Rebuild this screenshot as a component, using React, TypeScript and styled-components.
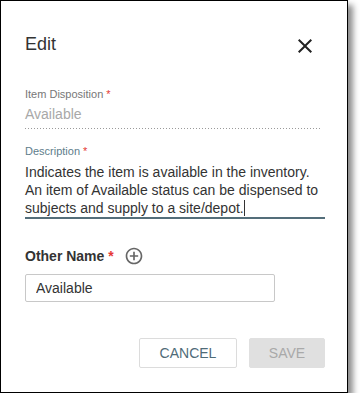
import React from "react";
import styled, { createGlobalStyle } from "styled-components";

const Global = createGlobalStyle`
  html, body { margin: 0; padding: 0; background: #ffffff; }
  body { font-family: "Liberation Sans", Arial, sans-serif; }
  * { box-sizing: border-box; }
`;

const Dialog = styled.div`
  width: 348px;
  height: 393px;
  background: #ffffff;
  border: 1px solid #000000;
  box-shadow: 5px 5px 6px rgba(0, 0, 0, 0.45);
  padding: 31px 22px 0 24px;
  display: flex;
  flex-direction: column;
`;

const Header = styled.div`
  display: flex;
  justify-content: space-between;
  align-items: flex-start;
  height: 24px;
`;

const Title = styled.h2`
  margin: 0;
  font-size: 18px;
  line-height: 24px;
  font-weight: 400;
  color: #333333;
`;

const CloseButton = styled.button`
  border: none;
  background: transparent;
  padding: 0;
  margin: 2px 8px 0 0;
  width: 24px;
  height: 24px;
  display: flex;
  cursor: pointer;
  color: #222222;
`;

const Field = styled.div<{ $top: number }>`
  margin-top: ${(p) => p.$top}px;
  display: flex;
  flex-direction: column;
`;

const Label = styled.div<{ $color: string }>`
  font-size: 11px;
  line-height: 13px;
  color: ${(p) => p.$color};
`;

const Req = styled.span`
  color: #e53935;
`;

const ReadValue = styled.div`
  margin-top: 4px;
  font-size: 14px;
  line-height: 18px;
  color: #a8a8a8;
  padding-bottom: 6px;
  margin-right: 3px;
  background-image: repeating-linear-gradient(
    to right,
    #9a9a9a 0,
    #9a9a9a 1px,
    transparent 1px,
    transparent 3px
  );
  background-size: 100% 1px;
  background-repeat: no-repeat;
  background-position: left bottom;
`;

const TextArea = styled.div`
  margin-top: 5px;
  font-size: 14px;
  line-height: 18px;
  color: #333333;
  border-bottom: 2px solid #546e7a;
`;

const Caret = styled.span`
  display: inline-block;
  width: 1px;
  height: 16px;
  background: #333333;
  vertical-align: -3px;
`;

const SectionRow = styled.div`
  margin-top: 27px;
  display: flex;
  align-items: center;
  gap: 10px;
  height: 20px;
`;

const SectionTitle = styled.div`
  font-size: 14px;
  line-height: 20px;
  font-weight: 700;
  color: #333333;
`;

const AddButton = styled.button`
  border: none;
  background: transparent;
  padding: 0;
  width: 20px;
  height: 20px;
  display: flex;
  color: #666666;
  cursor: pointer;
`;

const Input = styled.input`
  margin-top: 8px;
  width: 250px;
  height: 28px;
  border: 1px solid #c8c8c8;
  border-radius: 2px;
  padding: 0 10px;
  font-family: "Liberation Sans", Arial, sans-serif;
  font-size: 14px;
  color: #333333;
  outline: none;
`;

const Actions = styled.div`
  margin-top: 36px;
  display: flex;
  justify-content: flex-end;
  gap: 12px;
`;

const Button = styled.button<{ $variant: "outline" | "disabled"; $w: number }>`
  width: ${(p) => p.$w}px;
  height: 30px;
  border-radius: 2px;
  font-family: "Liberation Sans", Arial, sans-serif;
  font-size: 14px;
  text-transform: uppercase;
  cursor: pointer;
  border: 1px solid ${(p) => (p.$variant === "outline" ? "#dcdcdc" : "#e0e0e0")};
  background: ${(p) => (p.$variant === "outline" ? "#ffffff" : "#e0e0e0")};
  color: ${(p) => (p.$variant === "outline" ? "#4f6b78" : "#a9a9a9")};
`;

export default function App() {
  return (
    <>
      <Global />
      <Dialog>
        <Header>
          <Title>Edit</Title>
          <CloseButton aria-label="Close">
            <svg width="24" height="24" viewBox="0 0 24 24">
              <path
                fill="currentColor"
                d="M19 6.41L17.59 5 12 10.59 6.41 5 5 6.41 10.59 12 5 17.59 6.41 19 12 13.41 17.59 19 19 17.59 13.41 12z"
              />
            </svg>
          </CloseButton>
        </Header>

        <Field $top={32}>
          <Label $color="#777777">
            Item Disposition <Req>*</Req>
          </Label>
          <ReadValue>Available</ReadValue>
        </Field>

        <Field $top={16}>
          <Label $color="#607d8b">
            Description <Req>*</Req>
          </Label>
          <TextArea>
            Indicates the item is available in the inventory. An item of Available status can be
            dispensed to subjects and supply to a site/depot.
            <Caret />
          </TextArea>
        </Field>

        <SectionRow>
          <SectionTitle>
            Other Name <Req>*</Req>
          </SectionTitle>
          <AddButton aria-label="Add">
            <svg width="20" height="20" viewBox="0 0 24 24">
              <path
                fill="currentColor"
                d="M13 7h-2v4H7v2h4v4h2v-4h4v-2h-4V7zm-1-5C6.48 2 2 6.48 2 12s4.48 10 10 10 10-4.48 10-10S17.52 2 12 2zm0 18c-4.41 0-8-3.59-8-8s3.59-8 8-8 8 3.59 8 8-3.59 8-8 8z"
              />
            </svg>
          </AddButton>
        </SectionRow>

        <Input defaultValue="Available" />

        <Actions>
          <Button $variant="outline" $w={98}>
            Cancel
          </Button>
          <Button $variant="disabled" $w={76} disabled>
            Save
          </Button>
        </Actions>
      </Dialog>
    </>
  );
}
